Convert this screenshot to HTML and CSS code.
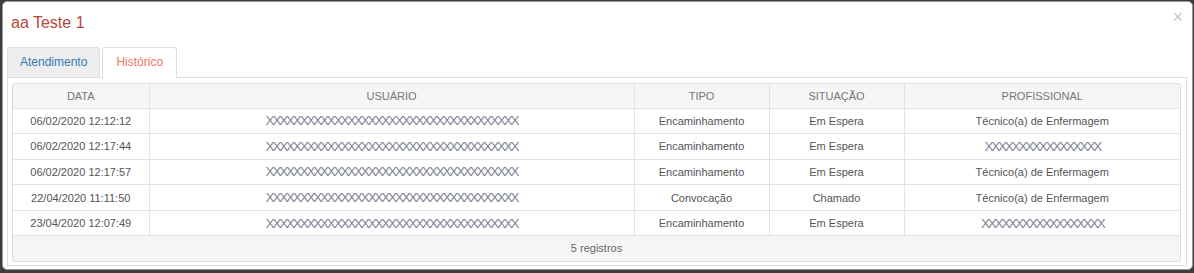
FILE: index.html
```html
<!DOCTYPE html>
<html lang="pt-BR">
<head>
    <meta charset="UTF-8">
    <title>aa Teste 1</title>
    <link rel="stylesheet" href="styles.css">
</head>
<body>
    <div class="modal">
        <div class="modal-header">
            <h4 class="modal-title">aa Teste 1</h4>
            <span class="close">&times;</span>
        </div>
        <div class="modal-body">
            <ul class="nav-tabs">
                <li class="tab">Atendimento</li>
                <li class="tab active">Histórico</li>
            </ul>
            <div class="tab-content">
                <div class="grid">
                    <table>
                        <thead>
                            <tr>
                                <th class="col-data">DATA</th>
                                <th class="col-usuario">USUÁRIO</th>
                                <th class="col-tipo">TIPO</th>
                                <th class="col-situacao">SITUAÇÃO</th>
                                <th>PROFISSIONAL</th>
                            </tr>
                        </thead>
                        <tbody>
                            <tr>
                                <td>06/02/2020 12:12:12</td>
                                <td><span class="mask">XXXXXXXXXXXXXXXXXXXXXXXXXXXXXXXXXXXXX</span></td>
                                <td>Encaminhamento</td>
                                <td>Em Espera</td>
                                <td>Técnico(a) de Enfermagem</td>
                            </tr>
                            <tr>
                                <td>06/02/2020 12:17:44</td>
                                <td><span class="mask">XXXXXXXXXXXXXXXXXXXXXXXXXXXXXXXXXXXXX</span></td>
                                <td>Encaminhamento</td>
                                <td>Em Espera</td>
                                <td><span class="mask">XXXXXXXXXXXXXXXXX</span></td>
                            </tr>
                            <tr>
                                <td>06/02/2020 12:17:57</td>
                                <td><span class="mask">XXXXXXXXXXXXXXXXXXXXXXXXXXXXXXXXXXXXX</span></td>
                                <td>Encaminhamento</td>
                                <td>Em Espera</td>
                                <td>Técnico(a) de Enfermagem</td>
                            </tr>
                            <tr>
                                <td>22/04/2020 11:11:50</td>
                                <td><span class="mask">XXXXXXXXXXXXXXXXXXXXXXXXXXXXXXXXXXXXX</span></td>
                                <td>Convocação</td>
                                <td>Chamado</td>
                                <td>Técnico(a) de Enfermagem</td>
                            </tr>
                            <tr>
                                <td>23/04/2020 12:07:49</td>
                                <td><span class="mask">XXXXXXXXXXXXXXXXXXXXXXXXXXXXXXXXXXXXX</span></td>
                                <td>Encaminhamento</td>
                                <td>Em Espera</td>
                                <td><span class="mask">XXXXXXXXXXXXXXXXXX</span></td>
                            </tr>
                        </tbody>
                    </table>
                    <div class="grid-footer">5 registros</div>
                </div>
            </div>
        </div>
    </div>
</body>
</html>
```

FILE: styles.css
```css
* {
    margin: 0;
    padding: 0;
    box-sizing: border-box;
}
body {
    font-family: "Liberation Sans", Arial, sans-serif;
    background-color: #3d3d3d;
    padding: 1px 1px 0 2px;
    height: 273px;
    overflow: hidden;
    color: #555;
}
.modal {
    background-color: #fff;
    border: 1px solid #999;
    border-radius: 5px;
    height: 269px;
    overflow: hidden;
}
.modal-header {
    display: flex;
    justify-content: space-between;
    align-items: flex-start;
    height: 45px;
    padding: 10px 9px 0 8px;
}
.modal-title {
    font-size: 16px;
    font-weight: normal;
    color: #b9473c;
    line-height: 22px;
}
.close {
    font-size: 18px;
    line-height: 17px;
    color: #c8c8c8;
    margin-top: -3px;
}
.modal-body {
    padding: 0 5px 4px 4px;
}
.nav-tabs {
    list-style: none;
    display: flex;
    gap: 2px;
    border-bottom: 1px solid #ddd;
    height: 31px;
}
.tab {
    height: 31px;
    padding: 0 12px;
    line-height: 29px;
    font-size: 12px;
    color: #337ab7;
    background-color: #eee;
    border: 1px solid #ddd;
    border-radius: 3px 3px 0 0;
}
.tab.active {
    height: 32px;
    padding: 0 13px;
    color: #f2735f;
    background-color: #fff;
    border-bottom-color: #fff;
}
.tab-content {
    border: 1px solid #ddd;
    border-top: none;
    padding: 5px 5px 3px 4px;
}
.grid {
    border: 1px solid #ddd;
    border-radius: 3px;
    overflow: hidden;
}
table {
    width: 100%;
    border-collapse: collapse;
    table-layout: fixed;
    font-size: 11px;
}
th, td {
    text-align: center;
    border-right: 1px solid #e3e3e3;
    border-bottom: 1px solid #e3e3e3;
    white-space: nowrap;
    overflow: hidden;
}
th:last-child, td:last-child {
    border-right: none;
}
th {
    height: 24px;
    font-weight: normal;
    color: #777;
    background-color: #f6f6f6;
}
td {
    height: 25.6px;
    color: #555;
}
.col-data { width: 136px; }
.col-usuario { width: 485px; }
.col-tipo { width: 135px; }
.col-situacao { width: 135px; }
.mask {
    font-size: 13.5px;
    letter-spacing: -2.2px;
    color: #7f8596;
}
.grid-footer {
    height: 25px;
    line-height: 24px;
    text-align: center;
    font-size: 11px;
    color: #666;
    background-color: #f5f5f5;
}
```
